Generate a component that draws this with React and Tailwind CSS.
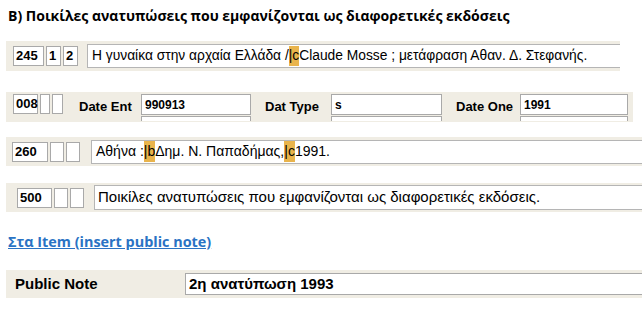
import React from 'react';

const Box = ({ children, className = '' }) => (
  <div className={`h-[20px] border border-[#a9a9a9] bg-white flex items-center px-[2px] font-bold text-[13px] text-black ${className}`}>
    {children}
  </div>
);

const Sub = ({ children }) => (
  <span className="bg-[#e9b44c]">{children}</span>
);

const DateField = ({ label, value, labelWidth, inputWidth }) => (
  <div className="flex items-start">
    <div className={`pt-[3px] font-bold text-[13px] text-black whitespace-nowrap ${labelWidth}`}>{label}</div>
    <div className="flex flex-col">
      <div className={`${inputWidth} h-[21px] border border-[#a9a9a9] bg-white flex items-center pl-[3px] font-bold text-[12px] text-black`}>
        {value}
      </div>
      <div className={`${inputWidth} h-[5px] mt-[1px] border-x border-t border-[#a9a9a9] bg-white`} />
    </div>
  </div>
);

const App = () => {
  return (
    <div className="w-[642px] h-[317px] bg-white overflow-hidden" style={{ fontFamily: '"Liberation Sans", Arial, sans-serif' }}>
      {/* Title */}
      <div className="pl-[8px] pt-[5px] text-[14px] font-bold text-black" style={{ fontFamily: '"Open Sans", sans-serif' }}>
        B) Ποικίλες ανατυπώσεις που εμφανίζονται ως διαφορετικές εκδόσεις
      </div>

      {/* 245 */}
      <div className="mt-[15px] ml-[6px] w-[614px] h-[30px] bg-[#f0ede4] flex items-center pl-[7px] gap-[2px]">
        <Box className="w-[31px]">245</Box>
        <Box className="w-[15px]">1</Box>
        <Box className="w-[15px]">2</Box>
        <div className="ml-[7px] flex-1 h-[24px] bg-white border-y border-l border-[#b5b5b5] flex items-center pl-[4px] text-[13.8px] text-black whitespace-nowrap">
          Η γυναίκα στην αρχαία Ελλάδα /<Sub>|c</Sub>Claude Mosse ; μετάφραση Αθαν. Δ. Στεφανής.
        </div>
      </div>

      {/* 008 */}
      <div className="mt-[21px] ml-[6px] w-[627px] h-[30px] bg-[#f0ede4] flex items-start pt-[2px] pl-[7px] overflow-hidden">
        <div className="flex gap-[2px]">
          <Box className="w-[25px] text-[12px]">008</Box>
          <Box className="w-[10px]" />
          <Box className="w-[11px]" />
        </div>
        <div className="ml-[16px] flex gap-[14px]">
          <DateField label="Date Ent" value="990913" labelWidth="w-[62px]" inputWidth="w-[110px]" />
          <DateField label="Dat Type" value="s" labelWidth="w-[66px]" inputWidth="w-[111px]" />
          <DateField label="Date One" value="1991" labelWidth="w-[64px]" inputWidth="w-[108px]" />
        </div>
      </div>

      {/* 260 */}
      <div className="mt-[15px] ml-[6px] h-[29px] bg-[#f0ede4] flex items-center pl-[6px] gap-[2px]">
        <Box className="w-[36px]">260</Box>
        <Box className="w-[14px]" />
        <Box className="w-[14px]" />
        <div className="ml-[9px] flex-1 h-[24px] bg-white border-y border-l border-[#b5b5b5] flex items-center pl-[4px] text-[14px] text-black">
          Αθήνα :<Sub>|b</Sub>Δημ. Ν. Παπαδήμας,<Sub>|c</Sub>1991.
        </div>
      </div>

      {/* 500 */}
      <div className="mt-[17px] ml-[6px] h-[29px] bg-[#f0ede4] flex items-center pl-[11px] gap-[2px]">
        <Box className="w-[35px]">500</Box>
        <Box className="w-[14px]" />
        <Box className="w-[14px]" />
        <div className="ml-[8px] flex-1 h-[25px] bg-white border-y border-l border-[#b5b5b5] flex items-center pl-[3px] text-[15px] text-black whitespace-nowrap">
          Ποικίλες ανατυπώσεις που εμφανίζονται ως διαφορετικές εκδόσεις.
        </div>
      </div>

      {/* Link */}
      <div className="mt-[20px] pl-[8px] leading-[20px]">
        <a href="#" className="text-[14.4px] font-bold text-[#2a73c4] underline" style={{ fontFamily: '"Open Sans", sans-serif' }}>
          Στα Item (insert public note)
        </a>
      </div>

      {/* Public note */}
      <div className="mt-[18px] ml-[6px] h-[28px] bg-[#f0ede4] flex items-center pl-[9px]">
        <div className="w-[170px] font-bold text-[15px] text-black">Public Note</div>
        <div className="flex-1 h-[22px] bg-white border-y border-l border-[#a9a9a9] flex items-center pl-[3px] font-bold text-[15px] text-black">
          2η ανατύπωση 1993
        </div>
      </div>
    </div>
  );
};

export default App;
